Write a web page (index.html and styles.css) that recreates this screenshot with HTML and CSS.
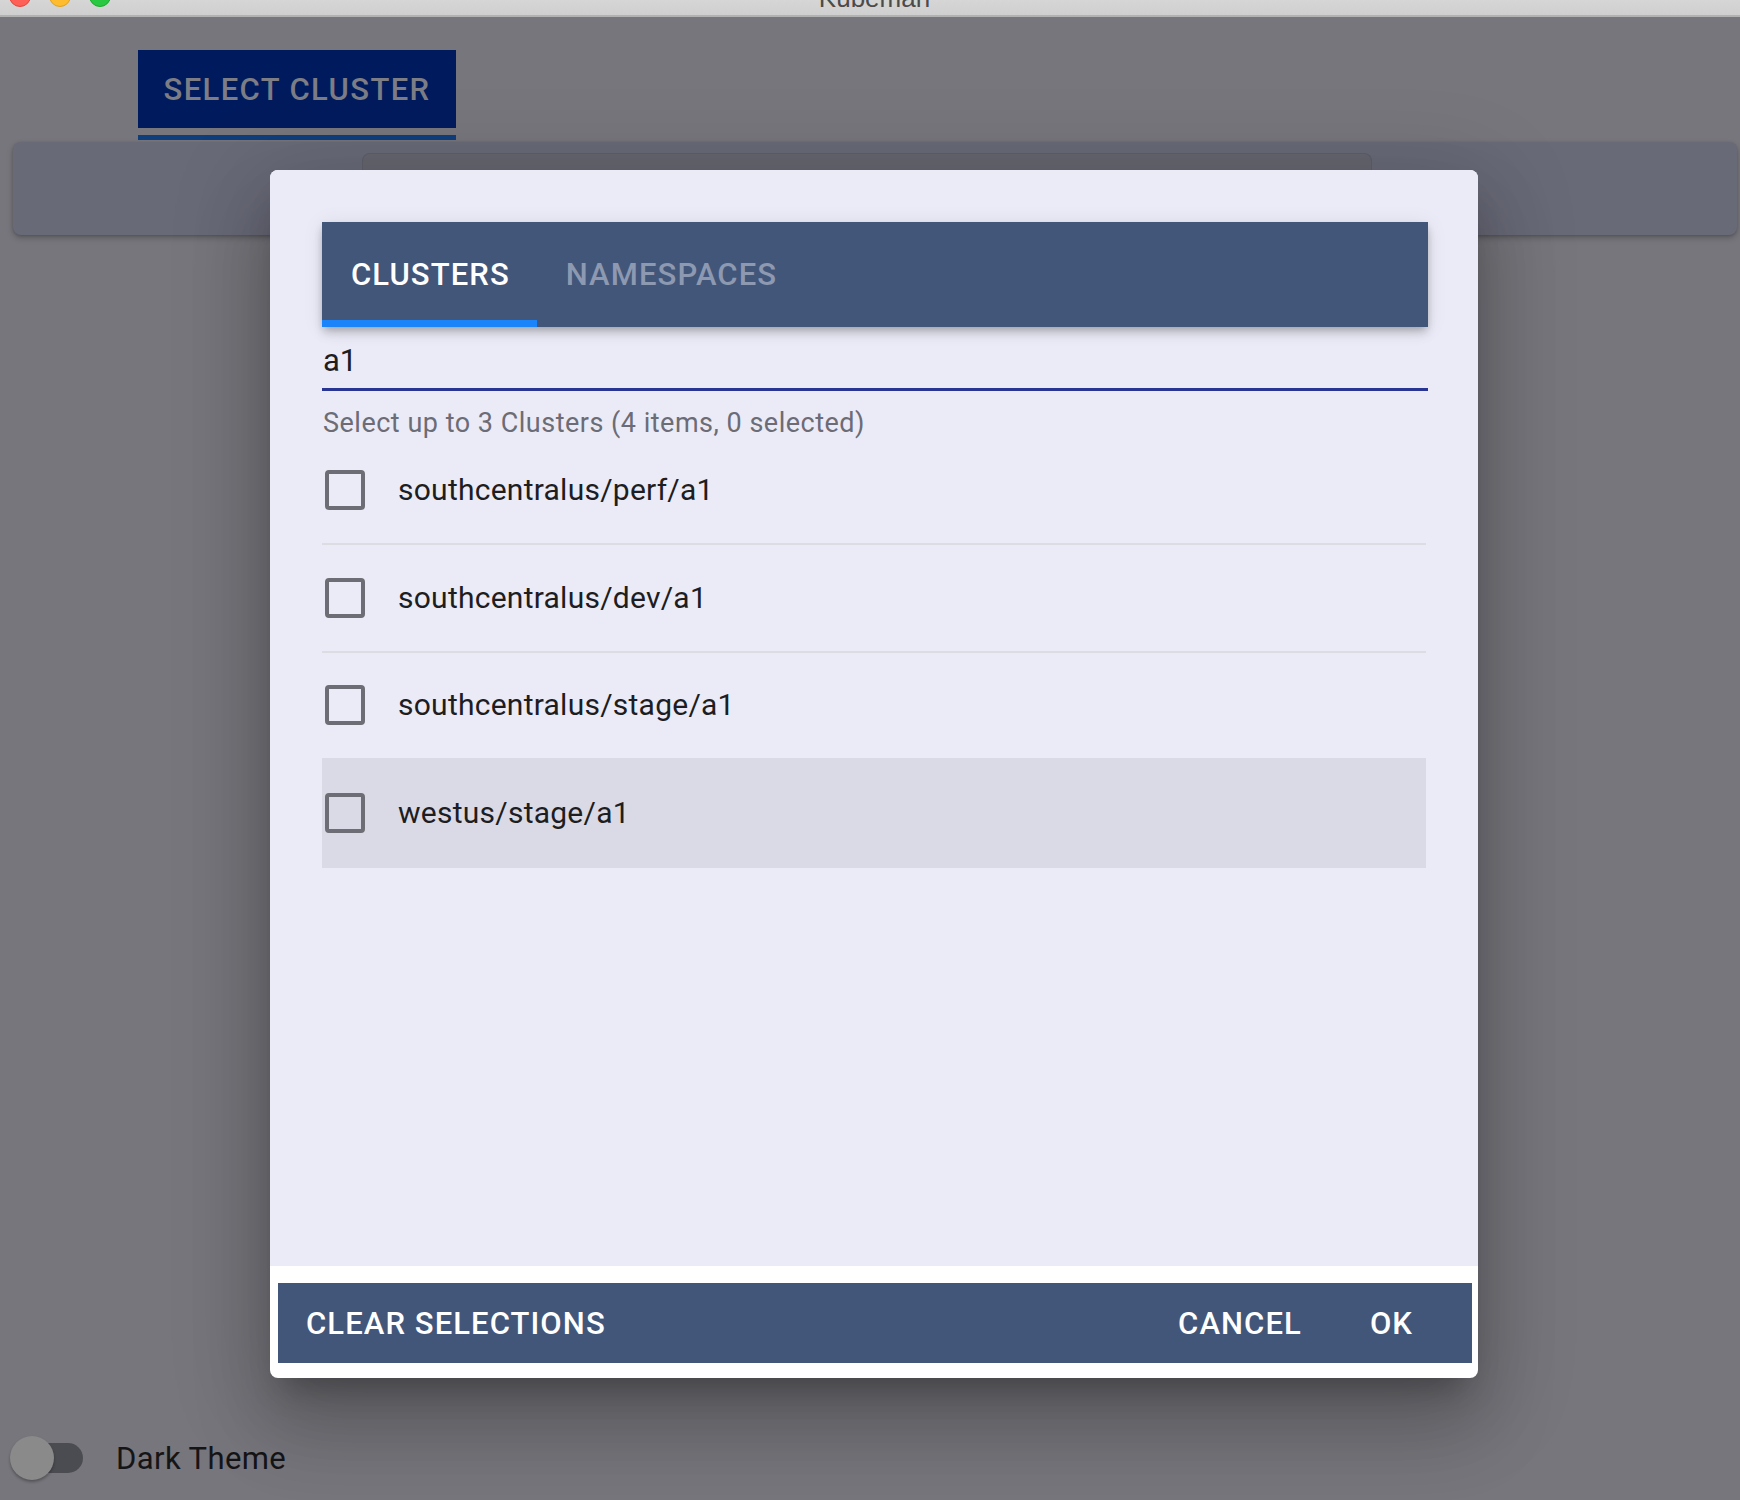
FILE: index.html
```html
<!DOCTYPE html>
<html lang="en">
<head>
<meta charset="utf-8">
<title>Kubeman</title>
<link rel="stylesheet" href="styles.css">
</head>
<body>
<div class="window">
  <header class="titlebar">
    <div class="lights">
      <span class="light red"></span>
      <span class="light yellow"></span>
      <span class="light green"></span>
    </div>
    <div class="title">Kubeman</div>
    <div class="spacer"></div>
  </header>
  <main class="app">
    <div class="top-tabs">
      <div class="top-tab">SELECT CLUSTER</div>
      <div class="top-tab-indicator"></div>
    </div>
    <section class="card">
      <div class="card-inner"></div>
    </section>
  </main>
  <footer class="theme-row">
    <div class="switch">
      <div class="switch-track"></div>
      <div class="switch-thumb"></div>
    </div>
    <span class="theme-label">Dark Theme</span>
  </footer>
</div>

<div class="dialog" role="dialog">
  <div class="dialog-content">
    <nav class="tabbar">
      <div class="tab active">Clusters</div>
      <div class="tab">Namespaces</div>
    </nav>
    <div class="search">a1</div>
    <div class="helper">Select up to 3 Clusters (4 items, 0 selected)</div>
    <ul class="list">
      <li class="row"><span class="checkbox"></span><span class="row-label">southcentralus/perf/a1</span></li>
      <li class="row"><span class="checkbox"></span><span class="row-label">southcentralus/dev/a1</span></li>
      <li class="row no-sep"><span class="checkbox"></span><span class="row-label">southcentralus/stage/a1</span></li>
      <li class="row hover"><span class="checkbox"></span><span class="row-label">westus/stage/a1</span></li>
    </ul>
  </div>
  <div class="dialog-actions">
    <div class="actions-bar">
      <span class="action clear">Clear Selections</span>
      <span class="action">Cancel</span>
      <span class="action">OK</span>
    </div>
  </div>
</div>
</body>
</html>
```

FILE: styles.css
```css
* { box-sizing: border-box; }

html, body {
  margin: 0;
  padding: 0;
}

body {
  width: 1740px;
  height: 1500px;
  overflow: hidden;
  background: #77767c;
  font-family: Roboto, "Liberation Sans", Arial, sans-serif;
  position: relative;
}

.window {
  display: flex;
  flex-direction: column;
  height: 1500px;
}

/* mac title bar */
.titlebar {
  height: 17px;
  flex: 0 0 17px;
  background: linear-gradient(#d6d6d6, #cfcfcf);
  border-bottom: 2px solid #b2b2b2;
  display: grid;
  grid-template-columns: 1fr auto 1fr;
  overflow: hidden;
}

.lights {
  display: flex;
  gap: 18px;
  padding-left: 9px;
  margin-top: -15px;
}

.light {
  width: 22px;
  height: 22px;
  border-radius: 50%;
  display: block;
}
.light.red { background: #fe5f57; border: 1px solid #e2463f; }
.light.yellow { background: #febc2e; border: 1px solid #dea123; }
.light.green { background: #28c840; border: 1px solid #1aab29; }

.title {
  font-family: "Liberation Sans", Arial, sans-serif;
  font-size: 26px;
  line-height: 26px;
  margin-top: -15px;
  margin-left: 9px;
  color: #4b4b4b;
}

/* app behind overlay */
.app {
  padding: 33px 3px 0 13px;
}

.top-tabs {
  margin-left: 125px;
  width: 318px;
  display: flex;
  flex-direction: column;
  gap: 7px;
}

.top-tab {
  height: 78px;
  background: #001b5d;
  color: #7d7d85;
  font-size: 31px;
  font-weight: 500;
  letter-spacing: 0.045em;
  display: flex;
  align-items: center;
  justify-content: center;
}

.top-tab-indicator {
  height: 5px;
  background: #0f3e7c;
}

.card {
  margin-top: 2px;
  height: 93px;
  border-radius: 8px;
  background: #696a78;
  box-shadow: 0 3px 6px rgba(0, 0, 0, 0.22), 0 1px 3px rgba(0, 0, 0, 0.15);
  display: flex;
  padding: 11px 365px 0 349px;
}

.card-inner {
  flex: 1;
  background: #65666f;
  border: 1px solid #5e5f69;
  border-bottom: none;
  border-radius: 8px 8px 0 0;
}

/* dark theme switch */
.theme-row {
  margin-top: auto;
  padding: 0 0 20px 10px;
  display: flex;
  align-items: center;
  gap: 33px;
}

.switch {
  position: relative;
  width: 73px;
  height: 44px;
  display: flex;
  align-items: center;
}

.switch-track {
  margin-left: 11px;
  width: 62px;
  height: 30px;
  border-radius: 15px;
  background: #4b4b52;
}

.switch-thumb {
  position: absolute;
  left: 0;
  top: 0;
  width: 44px;
  height: 44px;
  border-radius: 50%;
  background: #8a8a8b;
  box-shadow: 0 2px 3px rgba(0, 0, 0, 0.3);
}

.theme-label {
  font-size: 31px;
  letter-spacing: 0.4px;
  color: #151518;
}

/* dialog */
.dialog {
  position: absolute;
  left: 270px;
  top: 170px;
  width: 1208px;
  height: 1208px;
  border-radius: 8px;
  background: #ffffff;
  overflow: hidden;
  display: flex;
  flex-direction: column;
  box-shadow: 0 22px 30px -14px rgba(0, 0, 0, 0.25),
              0 48px 76px 6px rgba(0, 0, 0, 0.16),
              0 18px 92px 16px rgba(0, 0, 0, 0.14);
}

.dialog-content {
  flex: 1;
  background: #ebebf7;
  padding: 52px 50px 0 52px;
}

.tabbar {
  height: 105px;
  background: #42567a;
  display: flex;
  box-shadow: 0 4px 8px -2px rgba(0, 0, 0, 0.25),
              0 8px 10px 0 rgba(0, 0, 0, 0.08),
              0 2px 20px 0 rgba(0, 0, 0, 0.08);
}

.tab {
  position: relative;
  padding: 0 27px 0 29px;
  display: flex;
  align-items: center;
  font-size: 31px;
  font-weight: 500;
  letter-spacing: 0.035em;
  text-transform: uppercase;
  color: #8d99b1;
}

.tab.active {
  color: #ffffff;
}

.tab.active::after {
  content: "";
  position: absolute;
  left: 0;
  right: 0;
  bottom: 0;
  height: 7px;
  background: #1c84fa;
}

.search {
  padding: 16px 0 9px 1px;
  border-bottom: 3px solid #283593;
  font-size: 31px;
  line-height: 36px;
  color: #1d1d22;
}

.helper {
  margin-top: 18px;
  padding-left: 1px;
  font-size: 27px;
  line-height: 28px;
  letter-spacing: 0.5px;
  color: #6c6c76;
}

.list {
  list-style: none;
  margin: 0 2px 0 0;
  padding: 0;
}

.row {
  height: 108px;
  border-bottom: 2px solid #dcdce3;
  display: flex;
  align-items: center;
  gap: 33px;
  padding-left: 3px;
}

.row.no-sep {
  height: 105px;
  border-bottom-color: transparent;
}

.row.hover {
  height: 110px;
  border-bottom: none;
  background: #dadae6;
}

.checkbox {
  width: 40px;
  height: 40px;
  flex: 0 0 40px;
  border: 4px solid #6d6d75;
  border-radius: 4px;
}

.row-label {
  font-size: 30px;
  line-height: 36px;
  letter-spacing: 0.25px;
  color: #1d1d22;
}

.dialog-actions {
  padding: 17px 6px 15px 8px;
}

.actions-bar {
  height: 80px;
  background: #42567a;
  display: flex;
  align-items: center;
  gap: 10px;
  padding-right: 30px;
}

.action {
  font-size: 31px;
  font-weight: 500;
  letter-spacing: 0.035em;
  text-transform: uppercase;
  color: #ffffff;
  padding: 0 29px;
}

.action.clear {
  padding-left: 28px;
  margin-right: auto;
}
```
